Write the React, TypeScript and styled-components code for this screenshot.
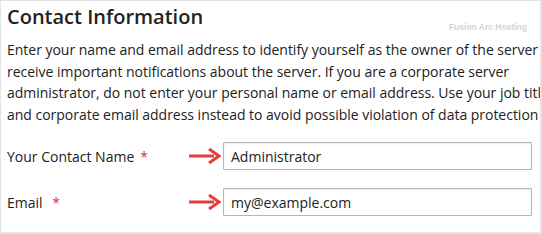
import React from "react";
import styled, { createGlobalStyle } from "styled-components";

const Global = createGlobalStyle`
  html, body { margin: 0; padding: 0; background: #fff; }
  body { font-family: "Open Sans", "Noto Sans", sans-serif; color: #222; }
`;

const Frame = styled.div`
  box-sizing: border-box;
  width: 542px;
  height: 234px;
  border: 1px solid #e4e4e4;
  border-right-width: 2px;
  border-bottom-width: 2px;
  overflow: hidden;
  padding: 2px 0 0 6px;
  display: flex;
  flex-direction: column;
`;

const Header = styled.div`
  display: flex;
  align-items: flex-end;
  justify-content: space-between;
  padding-right: 13px;
`;

const Title = styled.h1`
  margin: 0;
  font-size: 20px;
  font-weight: 600;
  line-height: 27px;
  color: #222;
`;

const Watermark = styled.span`
  font-family: "Liberation Sans", Arial, sans-serif;
  font-size: 8.5px;
  font-weight: 700;
  color: #d4d4d4;
  padding-bottom: 0px;
  margin-bottom: -2px;
`;

const Paragraph = styled.p`
  margin: 9px 0 0;
  font-size: 14px;
  line-height: 21.5px;
  white-space: nowrap;
  letter-spacing: -0.02px;
  color: #222;
`;

const Form = styled.div`
  margin-top: 17px;
  display: flex;
  flex-direction: column;
  gap: 18px;
`;

const Row = styled.div`
  display: grid;
  grid-template-columns: 181px 35px 309px;
  align-items: center;
`;

const Label = styled.label`
  font-size: 14px;
  color: #222;
`;

const Required = styled.span`
  color: #d9304f;
  margin-left: 6px;
`;

const Input = styled.input`
  box-sizing: border-box;
  width: 309px;
  height: 28px;
  border: 1px solid #b5b5b5;
  border-radius: 1px;
  padding: 0 7px;
  font-family: "Open Sans", sans-serif;
  font-size: 14px;
  color: #222;
  outline: none;
  box-shadow: inset 0 1px 2px rgba(0, 0, 0, 0.08);
`;

const Arrow = () => (
  <svg width="33" height="16" viewBox="0 0 33 16">
    <line x1="1" y1="8" x2="26" y2="8" stroke="#e53c3c" strokeWidth="3" />
    <path d="M21 1 L31 8 L21 15" fill="none" stroke="#e53c3c" strokeWidth="3" strokeLinejoin="miter" />
  </svg>
);

export default function App() {
  return (
    <>
      <Global />
      <Frame>
        <Header>
          <Title>Contact Information</Title>
          <Watermark>Fusion Arc Hosting</Watermark>
        </Header>
        <Paragraph>
          Enter your name and email address to identify yourself as the owner of the server and
          <br />
          receive important notifications about the server. If you are a corporate server
          <br />
          administrator, do not enter your personal name or email address. Use your job title
          <br />
          and corporate email address instead to avoid possible violation of data protection laws.
        </Paragraph>
        <Form>
          <Row>
            <Label>
              Your Contact Name<Required>*</Required>
            </Label>
            <Arrow />
            <Input defaultValue="Administrator" />
          </Row>
          <Row>
            <Label>
              Email <Required>*</Required>
            </Label>
            <Arrow />
            <Input defaultValue="my@example.com" />
          </Row>
        </Form>
      </Frame>
    </>
  );
}
